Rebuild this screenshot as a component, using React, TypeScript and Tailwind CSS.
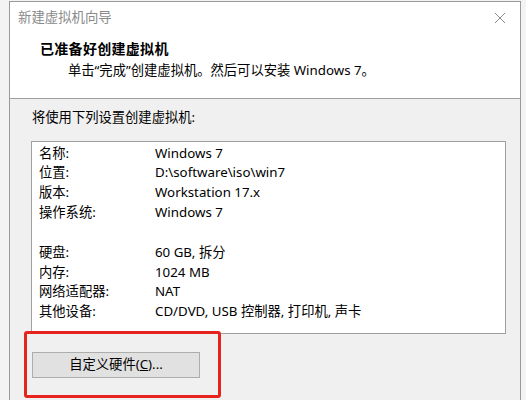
import React from "react";

const font = { fontFamily: '"Noto Sans", "Noto Sans CJK SC", sans-serif' };

const rows1: [string, string][] = [
  ["名称:", "Windows 7"],
  ["位置:", "D:\\software\\iso\\win7"],
  ["版本:", "Workstation 17.x"],
  ["操作系统:", "Windows 7"],
];
const rows2: [string, string][] = [
  ["硬盘:", "60 GB, 拆分"],
  ["内存:", "1024 MB"],
  ["网络适配器:", "NAT"],
  ["其他设备:", "CD/DVD, USB 控制器, 打印机, 声卡"],
];

function Row({ k, v }: { k: string; v: string }) {
  return (
    <div className="flex h-[19.6px] items-center">
      <div className="w-[116px] shrink-0">{k}</div>
      <div>{v}</div>
    </div>
  );
}

export default function App() {
  return (
    <div
      className="relative w-[526px] h-[400px] overflow-hidden bg-[#f3f3f3] text-[13.3px] text-black"
      style={font}
    >
      <div className="ml-[9px] mt-[1px] w-[512px] h-[420px] border-l border-t border-r border-[#9a9a9a] bg-[#f0f0f0] flex flex-col">
        <div className="bg-white border-b border-[#a0a0a0] h-[97px] flex flex-col">
          <div className="h-[31px] flex items-center justify-between pl-[8px] pr-[14px]">
            <span className="text-[#8a8a8a] text-[13.4px]">新建虚拟机向导</span>
            <svg width="12" height="12" viewBox="0 0 12 12">
              <path d="M1 1L11 11M11 1L1 11" stroke="#8a8a8a" strokeWidth="1" />
            </svg>
          </div>
          <div className="pl-[30px] mt-[6px] text-[14px] font-bold leading-[20px] tracking-[0.3px]">
            已准备好创建虚拟机
          </div>
          <div className="pl-[58px] mt-[1px] leading-[20px]">
            单击“完成”创建虚拟机。然后可以安装 Windows 7。
          </div>
        </div>
        <div className="pl-[21px] pr-[14px] flex flex-col">
          <div className="mt-[9px] pl-[1px] leading-[18px]">将使用下列设置创建虚拟机:</div>
          <div className="mt-[15px] w-[475px] h-[193px] bg-white border border-[#a0a0a0] pl-[7px] pt-[2px]">
            {rows1.map(([k, v]) => (
              <Row key={k} k={k} v={v} />
            ))}
            <div className="h-[21px]" />
            {rows2.map(([k, v]) => (
              <Row key={k} k={k} v={v} />
            ))}
          </div>
          <button className="mt-[18px] ml-[1px] w-[168px] h-[26px] bg-[#e1e1e1] border border-[#adadad] flex items-center justify-center">
            <span>
              自定义硬件(<span className="underline">C</span>)...
            </span>
          </button>
        </div>
      </div>
      <div className="absolute left-[24px] top-[331px] w-[197px] h-[67px] border-[3px] border-[#e5241d] rounded-[3px]" />
    </div>
  );
}
